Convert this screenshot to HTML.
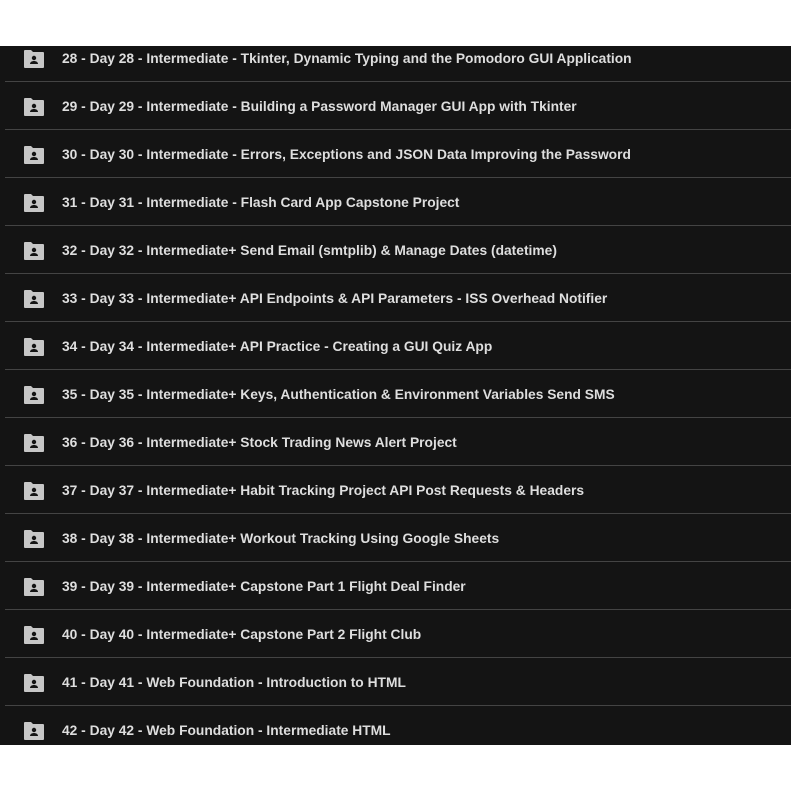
<!DOCTYPE html><html><head><style>
body{margin:0;width:791px;height:791px;background:#fff;overflow:hidden;font-family:"Liberation Sans",sans-serif}
.c{position:absolute;left:0;top:46px;width:791px;height:699px;background:#141414;overflow:hidden}
.r{position:absolute;left:0;width:791px;height:48px}
.r:after{content:"";position:absolute;left:5px;right:0;bottom:0;height:1px;background:#444}
.r svg{position:absolute;left:24px;top:16px}
.r span{position:absolute;left:62px;top:17px;font-size:13.8px;font-weight:bold;color:#dedede;white-space:nowrap}
</style></head><body><div class="c">
<script>
var t=["28 - Day 28 - Intermediate - Tkinter, Dynamic Typing and the Pomodoro GUI Application","29 - Day 29 - Intermediate - Building a Password Manager GUI App with Tkinter","30 - Day 30 - Intermediate - Errors, Exceptions and JSON Data Improving the Password","31 - Day 31 - Intermediate - Flash Card App Capstone Project","32 - Day 32 - Intermediate+ Send Email (smtplib) &amp; Manage Dates (datetime)","33 - Day 33 - Intermediate+ API Endpoints &amp; API Parameters - ISS Overhead Notifier","34 - Day 34 - Intermediate+ API Practice - Creating a GUI Quiz App","35 - Day 35 - Intermediate+ Keys, Authentication &amp; Environment Variables Send SMS","36 - Day 36 - Intermediate+ Stock Trading News Alert Project","37 - Day 37 - Intermediate+ Habit Tracking Project API Post Requests &amp; Headers","38 - Day 38 - Intermediate+ Workout Tracking Using Google Sheets","39 - Day 39 - Intermediate+ Capstone Part 1 Flight Deal Finder","40 - Day 40 - Intermediate+ Capstone Part 2 Flight Club","41 - Day 41 - Web Foundation - Introduction to HTML","42 - Day 42 - Web Foundation - Intermediate HTML"];
for(var i=0;i<t.length;i++)document.write('<div class="r" style="top:'+(i*48-12)+'px"><svg width="20" height="18" viewBox="0 0 20 18"><path d="M1 0h6l2 2h10a1 1 0 0 1 1 1v14a1 1 0 0 1-1 1H1a1 1 0 0 1-1-1V1a1 1 0 0 1 1-1z" fill="#c7c7c7"/><circle cx="10" cy="8" r="2.2" fill="#141414"/><path d="M6 14c0-2 2-3 4-3s4 1 4 3z" fill="#141414"/></svg><span>'+t[i]+'</span></div>');
</script>
</div></body></html>
